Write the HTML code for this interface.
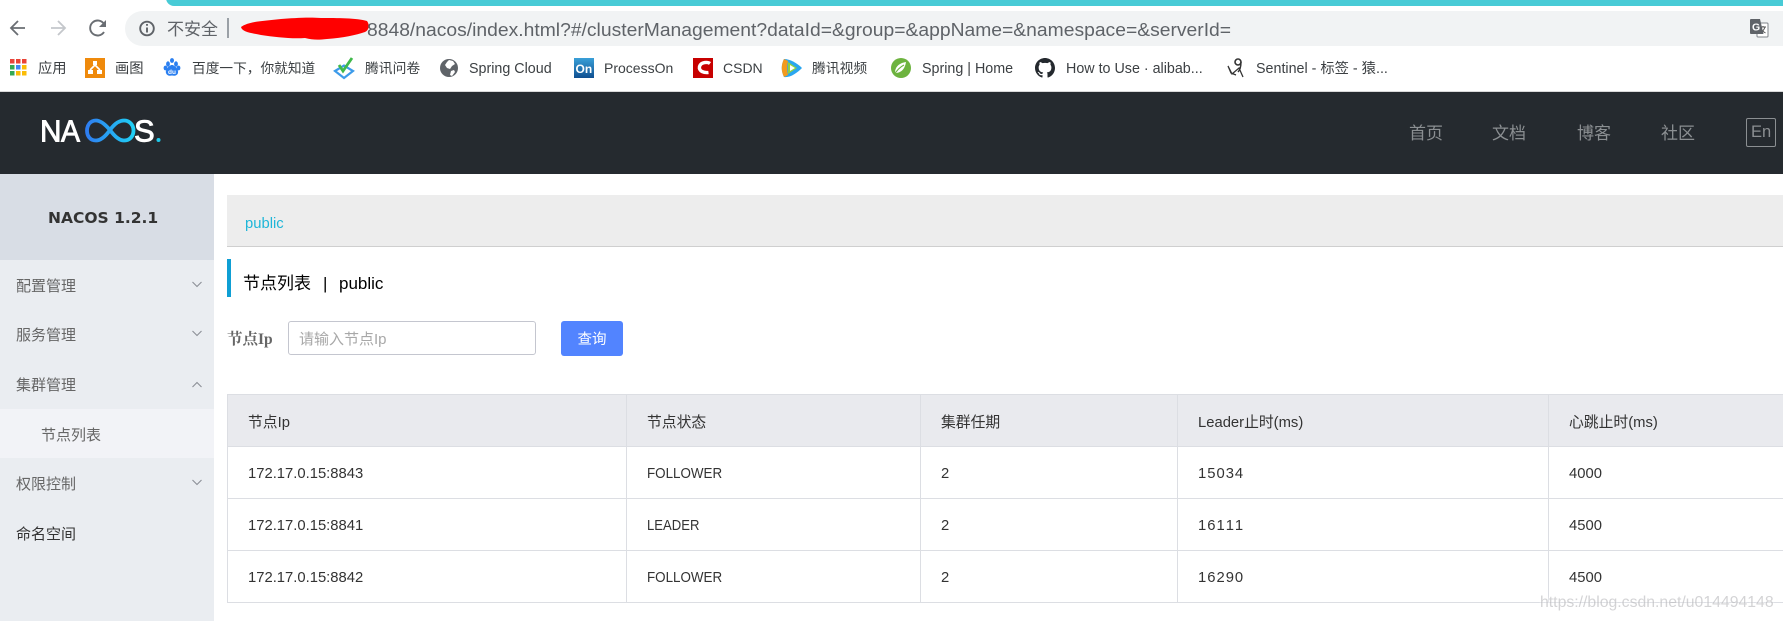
<!DOCTYPE html>
<html lang="zh">
<head>
<meta charset="utf-8">
<title>Nacos</title>
<style>
html,body{margin:0;padding:0;width:1783px;height:621px;overflow:hidden;background:#fff}
body{position:relative;font-family:"Liberation Sans","Noto Sans CJK SC",sans-serif}
.a{position:absolute}
.t{position:absolute;white-space:nowrap;height:24px;line-height:24px}
.bm{color:#3c4043;font-size:14.3px;top:57px}
.nav{color:#8b8f92;font-size:17px;top:122px}
.side{color:#666;font-size:15px;left:16px}
table{position:absolute;left:227px;top:394px;border-collapse:collapse;table-layout:fixed;width:1700px}
td,th{border:1px solid #dcdee3;padding:2px 0 0 20px;text-align:left;font-weight:normal;font-size:14.8px;color:#333;white-space:nowrap;overflow:hidden;font-kerning:none;height:49px}
th{background:#e9eaee}
.st{display:inline-block;transform-origin:0 50%;transform:scaleX(.905)}
.le{display:inline-block;transform-origin:0 50%;transform:scaleX(.885)}
.nu{letter-spacing:1px}
</style>
</head>
<body>
<!-- browser chrome -->
<div class="a" style="left:166px;top:-10px;width:1640px;height:16px;background:#48cbd6;border-radius:0 0 0 8px"></div>
<div class="a" style="left:125px;top:11px;width:1670px;height:35px;background:#f1f3f4;border-radius:18px 0 0 18px"></div>
<svg class="a" style="left:0;top:0" width="1783" height="92" viewBox="0 0 1783 92">
  <!-- nav -->
  <path d="M25 28H12M18 21l-7 7 7 7" fill="none" stroke="#6a6e73" stroke-width="1.800"/>
  <path d="M51 28h13M58 21l7 7-7 7" fill="none" stroke="#c4c7cb" stroke-width="1.800"/>
  <path d="M104 32a7.500 7.500 0 1 1 0-8" fill="none" stroke="#6a6e73" stroke-width="1.900"/>
  <path d="M106 20v7h-7z" fill="#6a6e73"/>
  <circle cx="147" cy="28.500" r="6.800" fill="none" stroke="#5f6368" stroke-width="1.900"/>
  <path d="M147 27.500v5M147 24v1.800" stroke="#5f6368" stroke-width="1.900"/>
  <rect x="227" y="18" width="2" height="20" fill="#9aa0a6"/>
  <!-- red blotch -->
  <path d="M241 27c8-6 24-6 40-8 12-1 28-2 40-1 16 0 36 0 46 3 3 4 2 9-2 11-9 3-22 6-38 7-9 1-14 1-22-1-14 1-30-1-44-3-10-2-19-3-20-8z" fill="#f00"/>
  <!-- translate icon -->
  <rect x="1757" y="23" width="11" height="14" rx="1" fill="#fff" stroke="#80848a"/>
  <path d="M1760 27h6M1763 26v1M1765 27c-1 3-3 5-4.500 6M1761 29c1 2 3 3 4.500 4" fill="none" stroke="#555" stroke-width="1"/>
  <path d="M1750 20q0-1 1-1h9l3.500 15h-12.500q-1 0-1-1z" fill="#5f6368"/>
  <text x="1752" y="30.500" font-family="Liberation Sans" font-weight="700" font-size="10.500" fill="#fff">G</text>
  <!-- apps -->
  <g>
    <rect x="10" y="59" width="4.500" height="4.500" fill="#e8453c"/><rect x="16" y="59" width="4.500" height="4.500" fill="#ea4335"/><rect x="22" y="59" width="4.500" height="4.500" fill="#ea4335"/>
    <rect x="10" y="65" width="4.500" height="4.500" fill="#34a853"/><rect x="16" y="65" width="4.500" height="4.500" fill="#4285f4"/><rect x="22" y="65" width="4.500" height="4.500" fill="#fbbc05"/>
    <rect x="10" y="71" width="4.500" height="4.500" fill="#34a853"/><rect x="16" y="71" width="4.500" height="4.500" fill="#fbbc05"/><rect x="22" y="71" width="4.500" height="4.500" fill="#fbbc05"/>
  </g>
  <!-- draw.io -->
  <rect x="85" y="58" width="20" height="20" fill="#ef8a0c"/>
  <path d="M93 61h4v4h-4zM88 70h5v4h-5zM97 70h5v4h-5z" fill="#fff"/>
  <path d="M95 65l-5 5M95 65l5 5" stroke="#fff" stroke-width="1.600"/>
  <!-- baidu -->
  <g fill="#2b7ff0">
    <ellipse cx="168" cy="64" rx="1.900" ry="2.700"/><ellipse cx="176" cy="64" rx="1.900" ry="2.700"/>
    <ellipse cx="172" cy="60.500" rx="2" ry="2.400"/><ellipse cx="165.500" cy="68" rx="1.900" ry="2.400"/><ellipse cx="178.500" cy="68" rx="1.900" ry="2.400"/>
    <path d="M172 65c3 0 7 5 6 8-1 3-4 3-6 2.500-2 .5-5 .5-6-2.500-1-3 3-8 6-8z"/>
  </g>
  <text x="168" y="74" font-family="Liberation Sans" font-weight="700" font-size="6.500" fill="#fff">du</text>
  <!-- wenjuan -->
  <path d="M335 71l9-5.500 9 5.500-9 7z" fill="none" stroke="#3d9bea" stroke-width="2.200"/>
  <path d="M339 65l4 6 9-13" fill="none" stroke="#3fb94a" stroke-width="2.800"/>
  <!-- globe -->
  <circle cx="449" cy="68" r="9" fill="#5f6368"/>
  <path d="M449 60l4 1 2 3-3 2-2 3-3-1-2-3 2-3zM451 71l3-1 1 2-3 4-2-1z" fill="#fff"/>
  <!-- On -->
  <defs>
    <linearGradient id="on" x1="0" y1="0" x2="0" y2="1"><stop offset="0" stop-color="#3aa0d8"/><stop offset="1" stop-color="#0f4f90"/></linearGradient>
  </defs>
  <rect x="574" y="58" width="20" height="20" fill="url(#on)"/>
  <text x="575.500" y="73" font-family="Liberation Sans" font-weight="700" font-size="12" fill="#fff">On</text>
  <!-- CSDN -->
  <rect x="693" y="58" width="20" height="20" fill="#c70000"/>
  <path d="M710 63.500c-2-1.500-9-2-10.500 3-1 5 5 6.500 9 6" fill="none" stroke="#fff" stroke-width="3.400"/>
  <!-- video -->
  <path d="M784 59c-3 6-3 12 0 18 6 1 13-4 18-9-5-5-12-9-18-9z" fill="#2aa6f0"/>
  <path d="M784 59c-3 6-3 12 0 18l4-2c-1-4-1-10 0-14z" fill="#f39a1d"/>
  <path d="M788 62v12l9-6z" fill="#8fd13f"/>
  <path d="M790 65v6l5-3z" fill="#fff"/>
  <!-- leaf -->
  <circle cx="901" cy="68" r="10" fill="#6db33f"/>
  <path d="M895 73c0-7 5-10 11-11-1 6-4 11-11 11z" fill="#fff"/>
  <path d="M894 75c3-5 6-8 10-10" fill="none" stroke="#6db33f" stroke-width="1.200"/>
  <!-- github -->
  <path transform="translate(1035 58) scale(1.25)" fill="#24292e" d="M8 0C3.58 0 0 3.58 0 8c0 3.54 2.29 6.53 5.47 7.59.4.07.55-.17.55-.38 0-.19-.01-.82-.01-1.49-2.01.37-2.53-.49-2.69-.94-.09-.23-.48-.94-.82-1.13-.28-.15-.68-.52-.01-.53.63-.01 1.08.58 1.23.82.72 1.21 1.87.87 2.33.66.07-.52.28-.87.51-1.07-1.78-.2-3.64-.89-3.64-3.95 0-.87.31-1.59.82-2.15-.08-.2-.36-1.02.08-2.12 0 0 .67-.21 2.2.82.64-.18 1.32-.27 2-.27.68 0 1.36.09 2 .27 1.53-1.04 2.2-.82 2.2-.82.44 1.1.16 1.92.08 2.12.51.56.82 1.27.82 2.15 0 3.07-1.87 3.75-3.65 3.95.29.25.54.73.54 1.48 0 1.07-.01 1.93-.01 2.2 0 .21.15.46.55.38A8.013 8.013 0 0016 8c0-4.42-3.58-8-8-8z"/>
  <!-- sentinel -->
  <path d="M1228 66l4 8 7-6 4 9M1228 66l3 7 5 2" fill="none" stroke="#333" stroke-width="1.300"/>
  <circle cx="1238" cy="62" r="3" fill="none" stroke="#333" stroke-width="1.600"/>
  <path d="M1241 62c0 5-1 8-3 10" fill="none" stroke="#333" stroke-width="1.400"/>
</svg>
<div class="t" style="left:167px;top:18px;font-size:17px;color:#5f6368">不安全</div>
<div class="t" style="left:367px;top:18px;font-size:18px;color:#5f6368;transform-origin:0 50%;transform:scaleX(1.072)">8848/nacos/index.html?#/clusterManagement?dataId=&amp;group=&amp;appName=&amp;namespace=&amp;serverId=</div>

<div class="t bm" style="left:38px">应用</div>
<div class="t bm" style="left:115px">画图</div>
<div class="t bm" style="left:192px;font-size:13.700px">百度一下，你就知道</div>
<div class="t bm" style="left:365px;font-size:13.800px">腾讯问卷</div>
<div class="t bm" style="left:469px">Spring Cloud</div>
<div class="t bm" style="left:604px;font-size:14px;top:56px">ProcessOn</div>
<div class="t bm" style="left:723px;font-size:14px;top:56px">CSDN</div>
<div class="t bm" style="left:812px;font-size:13.800px">腾讯视频</div>
<div class="t bm" style="left:922px">Spring | Home</div>
<div class="t bm" style="left:1066px">How to Use · alibab...</div>
<div class="t bm" style="left:1256px">Sentinel - 标签 - 猿...</div>

<!-- header -->
<div class="a" style="left:0;top:91px;width:1783px;height:83px;background:#252a2f;border-top:1px solid #d9d9d9;box-sizing:border-box"></div>
<svg class="a" style="left:30px;top:110px" width="140" height="40" viewBox="30 110 140 40">
  <defs><linearGradient id="inf2" gradientUnits="userSpaceOnUse" x1="86" y1="0" x2="134" y2="0"><stop offset="0" stop-color="#2f7cf0"/><stop offset="1" stop-color="#1fd0f5"/></linearGradient></defs>
  <text transform="translate(40 141.500) scale(.96 1)" font-family="Liberation Sans" font-size="31" fill="#fff" stroke="#fff" stroke-width=".9">N</text>
  <text transform="translate(61 141.500) scale(.92 1)" font-family="Liberation Sans" font-size="31" fill="#fff" stroke="#fff" stroke-width=".9">A</text>
  <path d="M110 130C104 123 100 120.500 96 120.500C90 120.500 87 125.500 87 130.500C87 136 90 140.500 96 140.500C100 140.500 105 137 110 130C115 123 120 120.500 124 120.500C130 120.500 133.500 125.500 133.500 130.500C133.500 136 130 140.500 124 140.500C120 140.500 115 137 110 130Z" fill="none" stroke="url(#inf2)" stroke-width="3.800"/>
  <text x="134" y="141.500" font-family="Liberation Sans" font-size="31" fill="#fff" stroke="#fff" stroke-width=".9">S</text>
  <circle cx="158.500" cy="140" r="2" fill="#1fc8ea"/>
</svg>
<div class="t nav" style="left:1409px">首页</div>
<div class="t nav" style="left:1492px">文档</div>
<div class="t nav" style="left:1577px">博客</div>
<div class="t nav" style="left:1661px">社区</div>
<div class="a" style="left:1746px;top:118px;width:30px;height:29px;box-sizing:border-box;border:1px solid #8b8f92;border-radius:2px"></div>
<div class="t nav" style="left:1751px;top:120px;font-size:16.500px">En</div>

<!-- sidebar -->
<div class="a" style="left:0;top:174px;width:214px;height:447px;background:#eaedf1"></div>
<div class="a" style="left:0;top:174px;width:214px;height:86px;background:#d8dde5"></div>
<div class="a" style="left:0;top:409px;width:214px;height:49px;background:#f2f3f7"></div>
<div class="t" style="left:48px;top:206px;font-family:'DejaVu Sans',sans-serif;font-weight:700;font-size:15.500px;color:#333">NACOS 1.2.1</div>
<div class="t side" style="top:275px">配置管理</div>
<div class="t side" style="top:324px">服务管理</div>
<div class="t side" style="top:374px">集群管理</div>
<div class="t side" style="top:424px;left:41px">节点列表</div>
<div class="t side" style="top:473px">权限控制</div>
<div class="t side" style="top:523px;color:#333">命名空间</div>
<svg class="a" style="left:0;top:174px" width="214" height="330" viewBox="0 174 214 330">
  <g fill="none" stroke="#8b8f96" stroke-width="1.100">
    <path d="M192.500 282l4.500 4.500 4.500-4.500"/>
    <path d="M192.500 331l4.500 4.500 4.500-4.500"/>
    <path d="M192.500 387l4.500-4.500 4.500 4.500"/>
    <path d="M192.500 480l4.500 4.500 4.500-4.500"/>
  </g>
</svg>

<!-- main -->
<div class="a" style="left:227px;top:195px;width:1556px;height:52px;box-sizing:border-box;background:#ededed;border-bottom:1px solid #cfcfcf"></div>
<div class="t" style="left:245px;top:212px;font-size:14.800px;color:#1fb6d8">public</div>
<div class="a" style="left:227px;top:259px;width:4px;height:38px;background:#0f9fd4"></div>
<div class="t" style="left:243px;top:272px;font-size:17px;color:#000">节点列表</div>
<div class="t" style="left:323px;top:272px;font-size:17px;color:#000">|</div>
<div class="t" style="left:339px;top:272px;font-size:17px;color:#000">public</div>
<div class="t" style="left:227px;top:328px;font-family:'Liberation Serif','Noto Serif CJK SC',serif;font-weight:700;font-size:15.500px;color:#666">节点Ip</div>
<div class="a" style="left:288px;top:321px;width:248px;height:34px;box-sizing:border-box;border:1px solid #c4c6cf;border-radius:3px;background:#fff"></div>
<div class="t" style="left:299px;top:328px;font-size:15px;color:#a8a8a8">请输入节点Ip</div>
<div class="a" style="left:561px;top:321px;width:62px;height:35px;background:#5284ff;border-radius:3px"></div>
<div class="t" style="left:561px;width:62px;text-align:center;top:328px;font-size:14.500px;color:#fff">查询</div>

<table>
  <colgroup><col style="width:399px"><col style="width:294px"><col style="width:257px"><col style="width:371px"><col style="width:379px"></colgroup>
  <tr><th>节点Ip</th><th>节点状态</th><th>集群任期</th><th>Leader止时(ms)</th><th>心跳止时(ms)</th></tr>
  <tr><td>172.17.0.15:8843</td><td><span class="st">FOLLOWER</span></td><td>2</td><td><span class="nu">15034</span></td><td>4000</td></tr>
  <tr><td>172.17.0.15:8841</td><td><span class="le">LEADER</span></td><td>2</td><td><span class="nu">16111</span></td><td>4500</td></tr>
  <tr><td>172.17.0.15:8842</td><td><span class="st">FOLLOWER</span></td><td>2</td><td><span class="nu">16290</span></td><td>4500</td></tr>
</table>
<div class="t" style="left:1540px;top:591px;font-size:15.800px;color:rgba(150,150,155,.42);text-shadow:0 0 2px #fff">https://blog.csdn.net/u014494148</div>
</body>
</html>
